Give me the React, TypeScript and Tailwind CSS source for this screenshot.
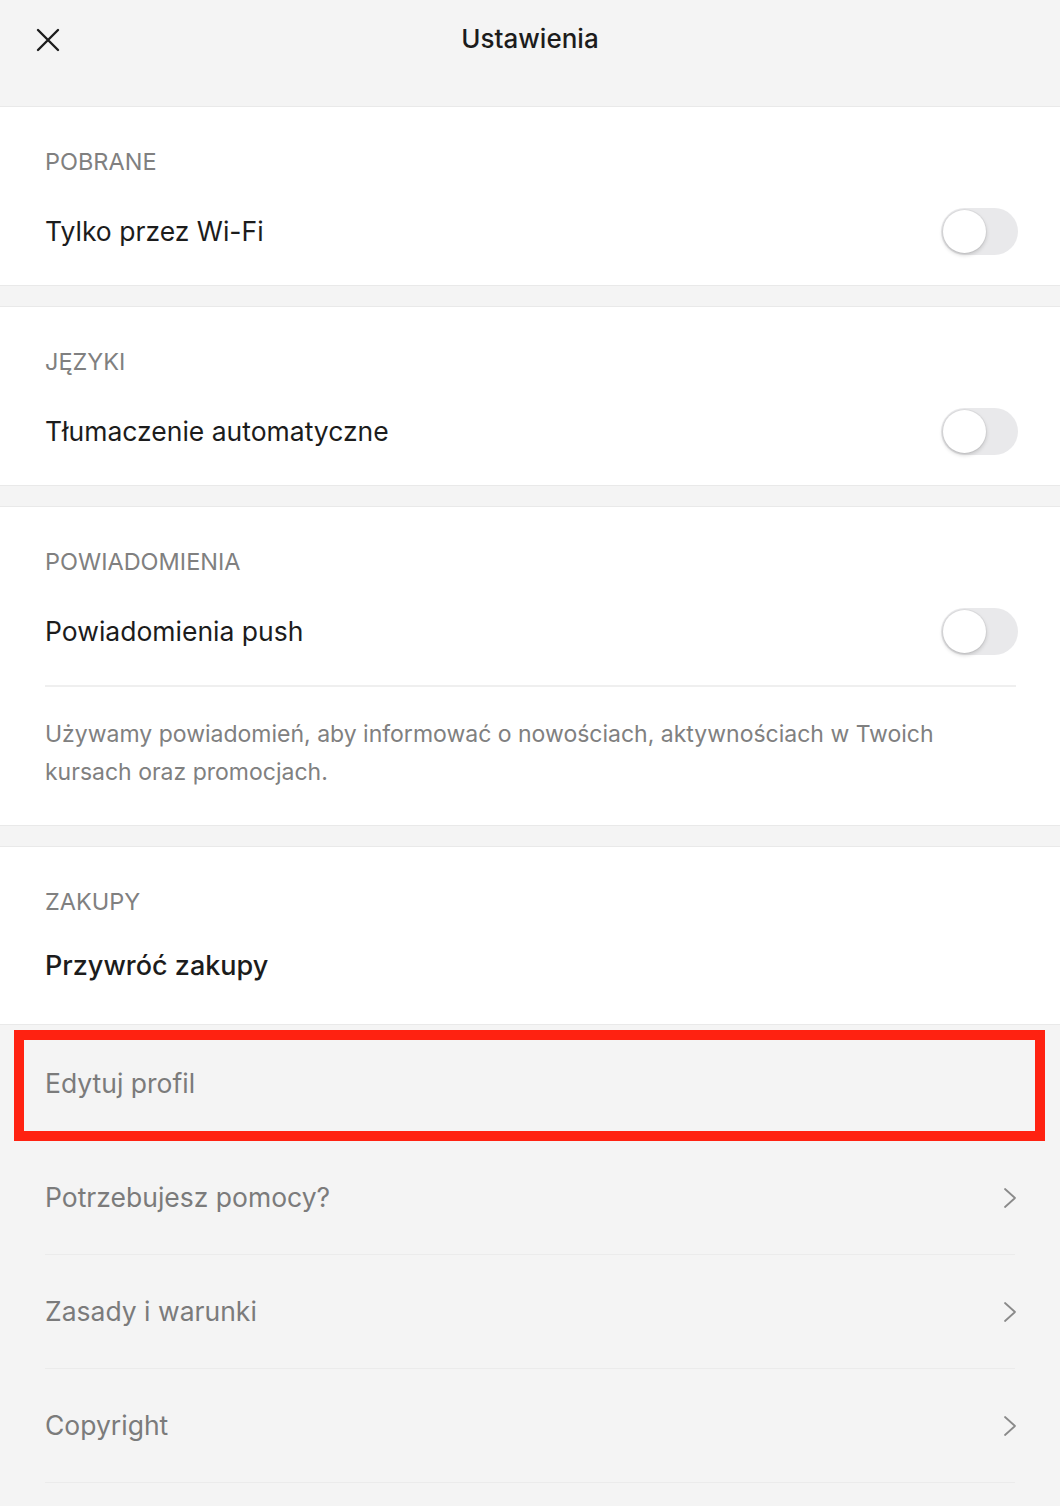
import type { ReactNode } from "react";

const font = { fontFamily: "Inter, 'Noto Sans', sans-serif" };

function Toggle() {
  return (
    <div className="relative h-[47px] w-[77px] shrink-0 rounded-full bg-[#e9e9eb]">
      <div className="absolute left-[2px] top-[2px] h-[43px] w-[43px] rounded-full bg-white shadow-[0_2px_4px_rgba(0,0,0,0.18),0_0_0_1px_rgba(0,0,0,0.04)]" />
    </div>
  );
}

function Chevron() {
  return (
    <svg width="14" height="22" viewBox="0 0 14 22" fill="none" className="mr-[-2px] shrink-0">
      <path d="M2 2l10 9-10 9" stroke="#8a8a8a" strokeWidth="1.8" strokeLinecap="round" strokeLinejoin="round" />
    </svg>
  );
}

function Section({ title, children }: { title: string; children: ReactNode }) {
  return (
    <section className="border-y border-[#e9e9e9] bg-white px-[45px]">
      <div className="pt-[40px] text-[23.5px] leading-[30px] text-[#808080]">{title}</div>
      {children}
    </section>
  );
}

function ToggleRow({ label }: { label: string }) {
  return (
    <div className="flex h-[108px] items-center justify-between">
      <span className="pt-[2px] text-[26.5px] text-[#1c1c1c]">{label}</span>
      <div className="mr-[-3px]">
        <Toggle />
      </div>
    </div>
  );
}

function LinkRow({ label, arrow = true, divider = true }: { label: string; arrow?: boolean; divider?: boolean }) {
  return (
    <div className={`flex h-[114px] items-center justify-between ${divider ? "border-b border-[#ebebeb]" : ""}`}>
      <span className="text-[26.5px] text-[#7b7b7b]">{label}</span>
      {arrow && <Chevron />}
    </div>
  );
}

export default function App() {
  return (
    <div className="min-h-[1506px] w-[1060px] bg-[#f4f4f4]" style={font}>
      <header className="relative flex h-[106px] items-start justify-center pt-[19px]">
        <button type="button" className="absolute left-[36px] top-[28px]">
          <svg width="24" height="24" viewBox="0 0 24 24" fill="none">
            <path d="M2 2l20 20M22 2L2 22" stroke="#1c1c1c" strokeWidth="2.4" strokeLinecap="round" />
          </svg>
        </button>
        <h1 className="text-[26px] font-medium text-[#1c1c1c]">Ustawienia</h1>
      </header>

      <div className="flex flex-col gap-[20px]">
        <Section title="POBRANE">
          <ToggleRow label="Tylko przez Wi-Fi" />
        </Section>

        <Section title="JĘZYKI">
          <ToggleRow label="Tłumaczenie automatyczne" />
        </Section>

        <Section title="POWIADOMIENIA">
          <ToggleRow label="Powiadomienia push" />
          <div className="mr-[-1px] h-[2px] bg-[#efefef]" />
          <p className="pb-[34px] pt-[28px] text-[23px] leading-[38px] text-[#808080]">
            Używamy powiadomień, aby informować o nowościach, aktywnościach w Twoich
            <br />
            kursach oraz promocjach.
          </p>
        </Section>

        <Section title="ZAKUPY">
          <div className="flex h-[107px] items-center pb-[8px]">
            <span className="text-[27px] font-medium text-[#1c1c1c]">Przywróć zakupy</span>
          </div>
        </Section>
      </div>

      <div className="relative px-[45px] pt-[2px]">
        <LinkRow label="Edytuj profil" arrow={false} divider={false} />
        <LinkRow label="Potrzebujesz pomocy?" />
        <LinkRow label="Zasady i warunki" />
        <LinkRow label="Copyright" />
        <div className="pointer-events-none absolute left-[14px] top-[5px] h-[111px] w-[1031px] border-[10px] border-[#ff2211]" />
      </div>
    </div>
  );
}
